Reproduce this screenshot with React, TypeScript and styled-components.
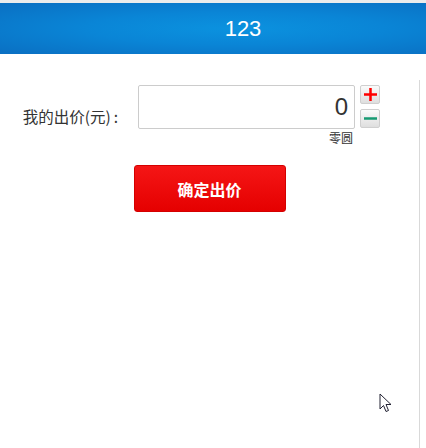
import React from 'react';
import styled, { createGlobalStyle } from 'styled-components';

const GlobalStyle = createGlobalStyle`
  html, body {
    margin: 0;
    padding: 0;
    background: #ffffff;
  }
  body {
    font-family: "Liberation Sans", "Noto Sans CJK SC", sans-serif;
    color: #333;
  }
`;

const Page = styled.div`
  position: relative;
  width: 426px;
  height: 448px;
  overflow: hidden;
  border-top: 3px solid #ececec;
  box-sizing: border-box;
`;

const Header = styled.header`
  height: 51px;
  display: flex;
  align-items: center;
  justify-content: center;
  padding-left: 60px;
  background: radial-gradient(ellipse at 55% 50%, #0b92df 0%, #0a85d6 45%, #0a6fc2 100%);
  color: #ffffff;
  font-family: "Liberation Sans", Arial, sans-serif;
  font-size: 22px;
`;

const Panel = styled.main`
  margin-top: 26px;
  width: 420px;
  height: 380px;
  border-right: 1px solid #d9d9d9;
  padding-top: 5px;
  box-sizing: border-box;
`;

const FormRow = styled.div`
  display: grid;
  grid-template-columns: 118px 217px 20px;
  column-gap: 20px;
  align-items: start;
  & > :nth-child(3) {
    margin-left: -15px;
  }
`;

const Label = styled.label`
  margin-top: 21px;
  text-align: right;
  font-family: "Noto Sans CJK SC", sans-serif;
  font-size: 15.5px;
  line-height: 20px;
  color: #333;
  white-space: nowrap;
`;

const Colon = styled.span`
  margin-left: 3px;
`;

const InputColumn = styled.div`
  display: flex;
  flex-direction: column;
  align-items: flex-end;
`;

const PriceInput = styled.input`
  width: 217px;
  height: 44px;
  box-sizing: border-box;
  border: 1px solid #cccccc;
  border-radius: 2px;
  padding: 0 6px 0 0;
  text-align: right;
  font-family: "Liberation Sans", Arial, sans-serif;
  font-size: 24px;
  color: #333;
  outline: none;
`;

const Capital = styled.span`
  margin-top: 2px;
  margin-right: 2px;
  font-family: "Noto Sans CJK SC", sans-serif;
  font-size: 12px;
  line-height: 14px;
  color: #333;
`;

const Steppers = styled.div`
  display: flex;
  flex-direction: column;
  gap: 5px;
`;

const StepButton = styled.button`
  width: 20px;
  height: 19px;
  padding: 0;
  box-sizing: border-box;
  border: 1px solid #cfcfcf;
  border-radius: 2px;
  background: linear-gradient(#fbfbfb, #dedede);
  display: flex;
  align-items: center;
  justify-content: center;
`;

const ButtonRow = styled.div`
  display: flex;
  justify-content: center;
  margin-top: 20px;
`;

const SubmitButton = styled.button`
  width: 152px;
  height: 47px;
  border: 1px solid #d40000;
  border-radius: 3px;
  background: linear-gradient(#f51616, #e50000);
  color: #ffffff;
  font-family: "Noto Sans CJK SC", sans-serif;
  font-weight: 700;
  font-size: 16px;
`;

const Cursor = styled.svg`
  position: absolute;
  left: 379px;
  top: 390px;
`;

export default function App() {
  return (
    <>
      <GlobalStyle />
      <Page>
        <Header>123</Header>
        <Panel>
          <FormRow>
            <Label>
              我的出价(元)<Colon>:</Colon>
            </Label>
            <InputColumn>
              <PriceInput defaultValue="0" />
              <Capital>零圆</Capital>
            </InputColumn>
            <Steppers>
              <StepButton aria-label="增加">
                <svg width="13" height="13" viewBox="0 0 13 13">
                  <rect x="0" y="5.25" width="13" height="2.5" fill="#ff0000" />
                  <rect x="5.25" y="0" width="2.5" height="13" fill="#ff0000" />
                </svg>
              </StepButton>
              <StepButton aria-label="减少">
                <svg width="13" height="13" viewBox="0 0 13 13">
                  <rect x="0" y="5.25" width="13" height="2.5" fill="#179b73" />
                </svg>
              </StepButton>
            </Steppers>
          </FormRow>
          <ButtonRow>
            <SubmitButton>确定出价</SubmitButton>
          </ButtonRow>
        </Panel>
        <Cursor width="13" height="20" viewBox="0 0 13 20">
          <path
            d="M1 1 L1 16 L4.5 12.5 L7 18.5 L9.5 17.5 L7 11.5 L12 11.5 Z"
            fill="#ffffff"
            stroke="#222233"
            strokeWidth="1"
            strokeLinejoin="round"
          />
        </Cursor>
      </Page>
    </>
  );
}
